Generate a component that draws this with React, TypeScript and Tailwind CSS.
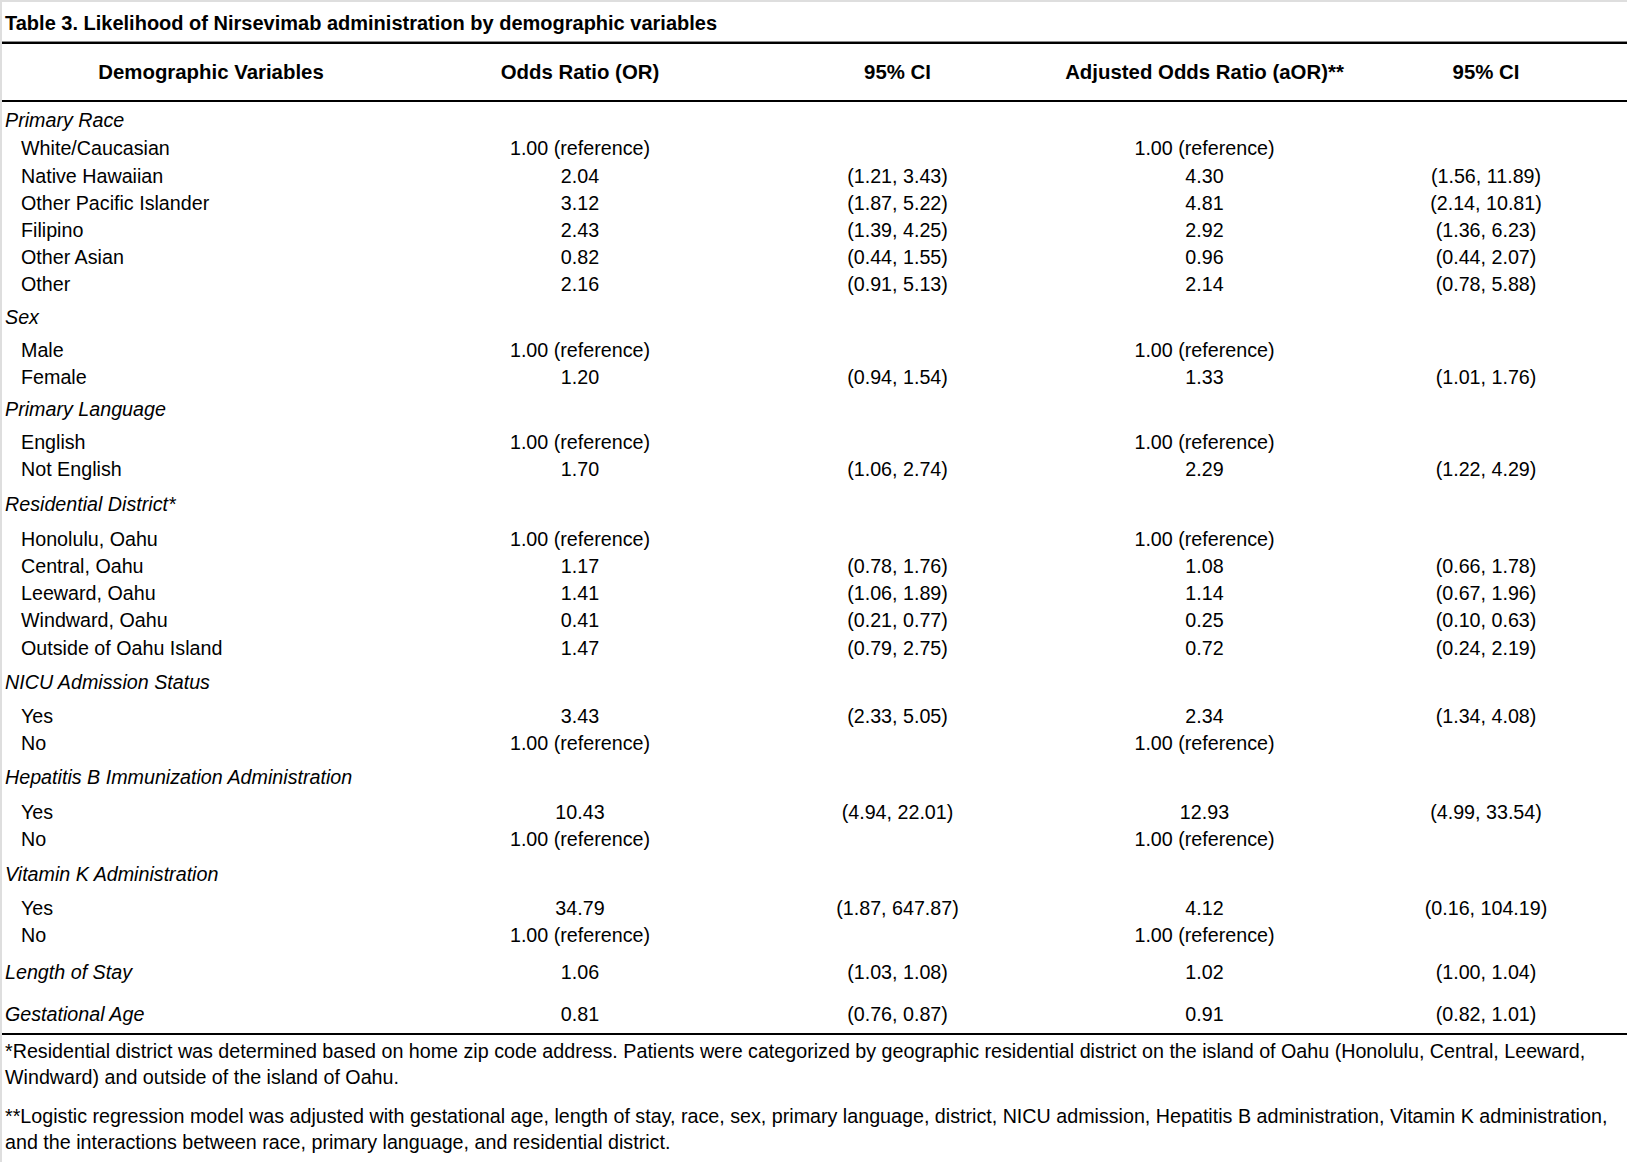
import React from "react";

type Row = { label: string; cat?: boolean; or?: string; ci?: string; aor?: string; aci?: string; h: string };

const rows: Row[] = [
  { label: "Primary Race", cat: true, h: "h-[32px] pt-[4px]" },
  { label: "White/Caucasian", or: "1.00 (reference)", aor: "1.00 (reference)", h: "h-[28px]" },
  { label: "Native Hawaiian", or: "2.04", ci: "(1.21, 3.43)", aor: "4.30", aci: "(1.56, 11.89)", h: "h-[27px]" },
  { label: "Other Pacific Islander", or: "3.12", ci: "(1.87, 5.22)", aor: "4.81", aci: "(2.14, 10.81)", h: "h-[27px]" },
  { label: "Filipino", or: "2.43", ci: "(1.39, 4.25)", aor: "2.92", aci: "(1.36, 6.23)", h: "h-[27px]" },
  { label: "Other Asian", or: "0.82", ci: "(0.44, 1.55)", aor: "0.96", aci: "(0.44, 2.07)", h: "h-[27px]" },
  { label: "Other", or: "2.16", ci: "(0.91, 5.13)", aor: "2.14", aci: "(0.78, 5.88)", h: "h-[30px] pb-[3px]" },
  { label: "Sex", cat: true, h: "h-[33px]" },
  { label: "Male", or: "1.00 (reference)", aor: "1.00 (reference)", h: "h-[30px] pt-[3px]" },
  { label: "Female", or: "1.20", ci: "(0.94, 1.54)", aor: "1.33", aci: "(1.01, 1.76)", h: "h-[30px] pb-[3px]" },
  { label: "Primary Language", cat: true, h: "h-[32px]" },
  { label: "English", or: "1.00 (reference)", aor: "1.00 (reference)", h: "h-[30px] pt-[3px]" },
  { label: "Not English", or: "1.70", ci: "(1.06, 2.74)", aor: "2.29", aci: "(1.22, 4.29)", h: "h-[32px] pb-[4px]" },
  { label: "Residential District*", cat: true, h: "h-[34px]" },
  { label: "Honolulu, Oahu", or: "1.00 (reference)", aor: "1.00 (reference)", h: "h-[31px] pt-[4px]" },
  { label: "Central, Oahu", or: "1.17", ci: "(0.78, 1.76)", aor: "1.08", aci: "(0.66, 1.78)", h: "h-[27px]" },
  { label: "Leeward, Oahu", or: "1.41", ci: "(1.06, 1.89)", aor: "1.14", aci: "(0.67, 1.96)", h: "h-[27px]" },
  { label: "Windward, Oahu", or: "0.41", ci: "(0.21, 0.77)", aor: "0.25", aci: "(0.10, 0.63)", h: "h-[28px]" },
  { label: "Outside of Oahu Island", or: "1.47", ci: "(0.79, 2.75)", aor: "0.72", aci: "(0.24, 2.19)", h: "h-[31px] pb-[4px]" },
  { label: "NICU Admission Status", cat: true, h: "h-[34px]" },
  { label: "Yes", or: "3.43", ci: "(2.33, 5.05)", aor: "2.34", aci: "(1.34, 4.08)", h: "h-[30px] pt-[4px]" },
  { label: "No", or: "1.00 (reference)", aor: "1.00 (reference)", h: "h-[31px] pb-[4px]" },
  { label: "Hepatitis B Immunization Administration", cat: true, h: "h-[34px]" },
  { label: "Yes", or: "10.43", ci: "(4.94, 22.01)", aor: "12.93", aci: "(4.99, 33.54)", h: "h-[31px] pt-[4px]" },
  { label: "No", or: "1.00 (reference)", aor: "1.00 (reference)", h: "h-[31px] pb-[4px]" },
  { label: "Vitamin K Administration", cat: true, h: "h-[35px]" },
  { label: "Yes", or: "34.79", ci: "(1.87, 647.87)", aor: "4.12", aci: "(0.16, 104.19)", h: "h-[30px] pt-[4px]" },
  { label: "No", or: "1.00 (reference)", aor: "1.00 (reference)", h: "h-[32px] pb-[4px]" },
  { label: "Length of Stay", cat: true, or: "1.06", ci: "(1.03, 1.08)", aor: "1.02", aci: "(1.00, 1.04)", h: "h-[40px] pb-[2px]" },
  { label: "Gestational Age", cat: true, or: "0.81", ci: "(0.76, 0.87)", aor: "0.91", aci: "(0.82, 1.01)", h: "h-[39px] pt-[2px]" },
];

const grid = "grid grid-cols-[418px_320px_315px_299px_264px]";

export default function App() {
  return (
    <div
      className="w-[1627px] h-[1162px] bg-white border-l-2 border-t-2 border-[#dedede] text-black text-[19.7px] leading-none overflow-hidden"
      style={{ fontFamily: '"Liberation Sans", Arial, sans-serif' }}
    >
      <div className="h-[39px] flex items-center pl-[3px] pt-[2px] font-bold text-[20px]">
        Table 3. Likelihood of Nirsevimab administration by demographic variables
      </div>
      <div className="h-px bg-[#8a8a8a]" />
      <div className="h-[2px] bg-black" />
      <div className={`${grid} h-[56px] items-center font-bold text-[20.4px] text-center`}>
        <div>Demographic Variables</div>
        <div>Odds Ratio (OR)</div>
        <div>95% CI</div>
        <div>Adjusted Odds Ratio (aOR)**</div>
        <div>95% CI</div>
      </div>
      <div className="h-[2px] bg-black" />
      <div className="pt-[1px]">
        {rows.map((r, i) => (
          <div key={i} className={`${grid} ${r.h} items-center`}>
            <div className={r.cat ? "italic pl-[3px]" : "pl-[19px]"}>{r.label}</div>
            <div className="text-center">{r.or ?? ""}</div>
            <div className="text-center">{r.ci ?? ""}</div>
            <div className="text-center">{r.aor ?? ""}</div>
            <div className="text-center">{r.aci ?? ""}</div>
          </div>
        ))}
      </div>
      <div className="h-[2px] bg-black" />
      <div className="pl-[3px] pr-0 pt-[3px] leading-[26px]">
        <p>
          *Residential district was determined based on home zip code address. Patients were categorized by geographic residential district on the island of Oahu (Honolulu, Central, Leeward, Windward) and outside of the island of Oahu.
        </p>
        <p className="mt-[13px]">
          **Logistic regression model was adjusted with gestational age, length of stay, race, sex, primary language, district, NICU admission, Hepatitis B administration, Vitamin K administration, and the interactions between race, primary language, and residential district.
        </p>
      </div>
    </div>
  );
}
